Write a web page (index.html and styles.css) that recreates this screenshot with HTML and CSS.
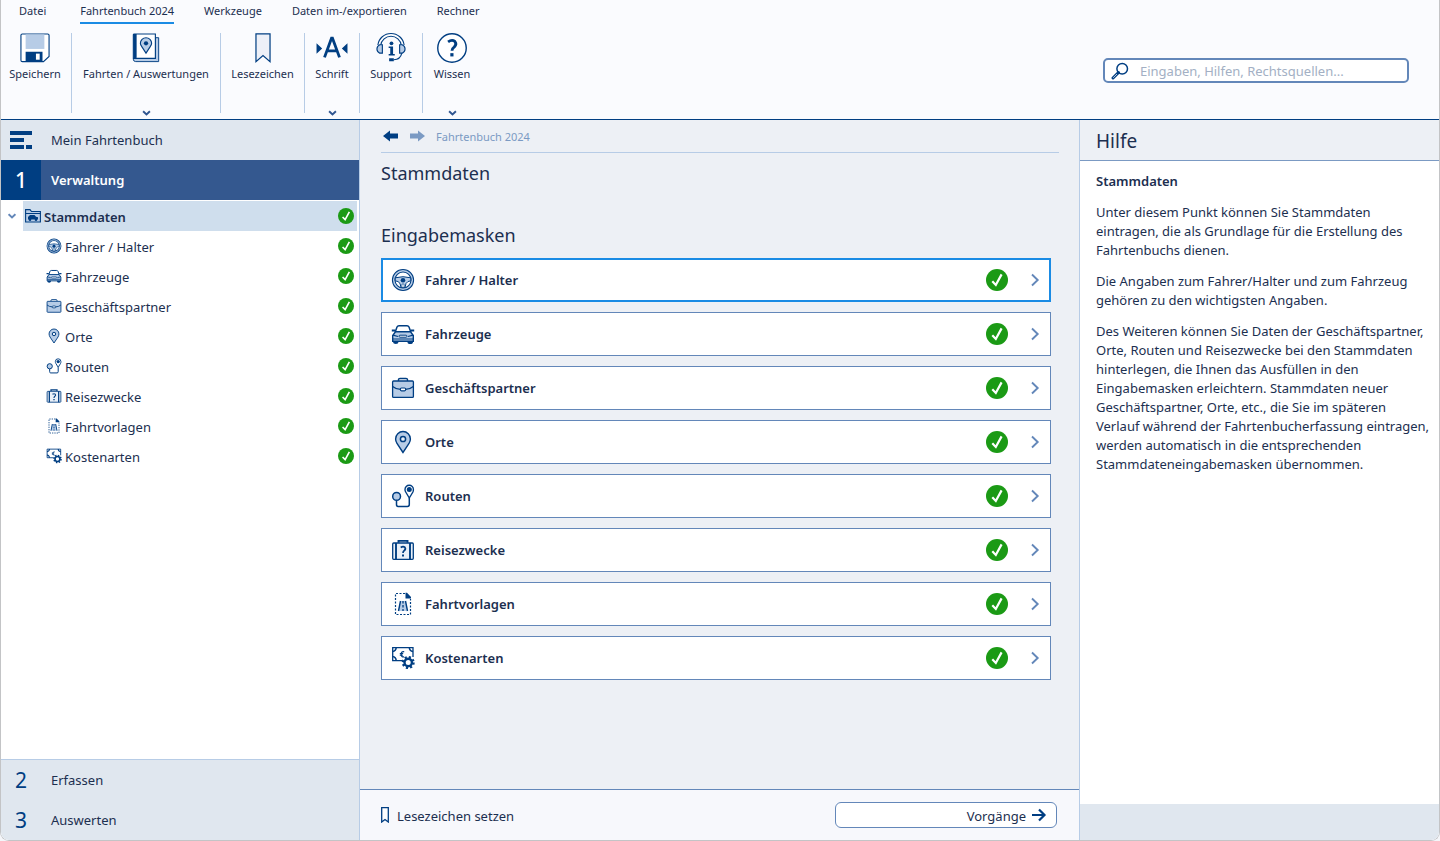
FILE: index.html
```html
<!DOCTYPE html>
<html lang="de">
<head>
<meta charset="utf-8">
<meta name="viewport" content="width=device-width, initial-scale=1">
<title>Fahrtenbuch 2024</title>
<link rel="stylesheet" href="styles.css">
</head>
<body>
<svg class="sprite" aria-hidden="true">
  <symbol id="i-wheel" viewBox="0 0 24 24">
    <circle cx="12" cy="12" r="9.300" fill="#fff" stroke="#003e82" stroke-width="3.600"/>
    <circle cx="12" cy="12" r="9.300" fill="none" stroke="#b7cce6" stroke-width="1.500"/>
    <path d="M4.200 9.800Q12 7.600 19.800 9.800V12.800Q16.500 13 15 15.500L14 19.500H10L9 15.500Q7.500 13 4.200 12.800Z" fill="#b7cce6" stroke="#003e82" stroke-width="1"/>
    <path d="M11 16H13L13.300 19.300H10.700Z" fill="#fff" stroke="#003e82" stroke-width=".6"/>
    <circle cx="12" cy="12.200" r="2.300" fill="#003e82"/>
  </symbol>
  <symbol id="i-car" viewBox="0 0 24 24">
    <path d="M4.200 10L6 5Q6.600 3.700 8 3.700H16Q17.400 3.700 18 5L19.800 10" fill="#fff" stroke="#003e82" stroke-width="1.500"/>
    <path d="M.8 8.500H4.200M19.800 8.500H23.200" stroke="#003e82" stroke-width="1.800"/>
    <path d="M1.700 19.300V13.500L4.500 9.800H19.500L22.300 13.500V19.300Z" fill="#b7cce6" stroke="#003e82" stroke-width="1.400"/>
    <path d="M2 13.200L7 14.500M22 13.200L17 14.500M2 17H22" stroke="#003e82" stroke-width="1.200"/>
    <rect x="8" y="13.200" width="8" height="2" rx="1" fill="#fff" stroke="#003e82"/>
    <path d="M2 19.300H7.500V20Q7.500 22 4.800 22T2 20ZM16.500 19.300H22V20Q22 22 19.200 22T16.500 20Z" fill="#003e82"/>
  </symbol>
  <symbol id="i-case" viewBox="0 0 24 24">
    <path d="M7.500 5V3.500Q7.500 2.500 9 2.500H15Q16.500 2.500 16.500 3.500V5" fill="none" stroke="#003e82" stroke-width="1.400"/>
    <rect x="1.600" y="5" width="20.800" height="16.400" rx="1" fill="#b7cce6" stroke="#003e82" stroke-width="1.300"/>
    <path d="M1.600 10.500Q5 13.300 9.500 13.300H14.500Q19 13.300 22.400 10.500" fill="none" stroke="#003e82" stroke-width="1.300"/>
    <rect x="9.300" y="12" width="5.400" height="2.800" rx="1.200" fill="#fff" stroke="#003e82" stroke-width="1.200"/>
  </symbol>
  <symbol id="i-pin" viewBox="0 0 24 24">
    <path d="M12 22.500L6 13.500Q4.600 11 4.600 8.900A7.400 7.400 0 0 1 19.400 8.900Q19.400 11 18 13.500Z" fill="#b7cce6" stroke="#003e82" stroke-width="1.400"/>
    <circle cx="12" cy="9" r="2.600" fill="#e9f0f8" stroke="#003e82" stroke-width="1.500"/>
  </symbol>
  <symbol id="i-route" viewBox="0 0 24 24">
    <path d="M5.500 16.500V20.500Q5.500 22.400 7 22.400H16.500Q18.300 22.400 18.300 20.500V14" fill="none" stroke="#003e82" stroke-width="1.500"/>
    <circle cx="5.600" cy="12.400" r="3.900" fill="#b7cce6" stroke="#003e82" stroke-width="1.500"/>
    <path d="M18.300 14L14.700 8Q14 6.800 14 5.400A4.200 4.200 0 0 1 22.400 5.400Q22.400 6.800 21.900 8Z" fill="#fff" stroke="#003e82" stroke-width="1.400"/>
    <circle cx="18.300" cy="5.400" r="2.500" fill="#003e82"/>
  </symbol>
  <symbol id="i-luggage" viewBox="0 0 24 24">
    <path d="M7.500 4.800V2.900H16.500V4.800" fill="none" stroke="#003e82" stroke-width="1.900"/>
    <rect x="1.700" y="5" width="20.600" height="16.300" rx="1" fill="#e9f0f8" stroke="#003e82" stroke-width="1.300"/>
    <path d="M5 5V21.500M19 5V21.500" stroke="#003e82" stroke-width="1.900"/>
    <path d="M9.700 9.500Q12 8 13.800 9.200Q15.200 10.900 13.300 12.500Q12 13.400 12 15" fill="none" stroke="#003e82" stroke-width="1.700"/>
    <path d="M11 16.500H13V18.500H11Z" fill="#003e82"/>
  </symbol>
  <symbol id="i-template" viewBox="0 0 24 24">
    <path d="M14 1.500H4.500V22.500H19.500V7" fill="none" stroke="#003e82" stroke-width="1.200" stroke-dasharray="2 1.500"/>
    <path d="M14.500 .8H16L20 5V6.500H14.500Z" fill="#003e82"/>
    <path d="M9.500 9H14.500L17 19H7Z" fill="#b7cce6"/>
    <path d="M9.500 9L7.500 19M14.500 9L16.500 19" stroke="#003e82" stroke-width="1.400"/>
    <path d="M12 9V19" stroke="#003e82" stroke-width="1.300" stroke-dasharray="2.500 1.500"/>
  </symbol>
  <symbol id="i-cost" viewBox="0 0 24 24">
    <path d="M11 14.600H1.700V1.700H22V11" fill="#fff" stroke="#003e82" stroke-width="1.300"/>
    <path d="M1.500 5.500Q5 5 5.200 1.500M22 5.500Q18.500 5 18.300 1.500M1.500 10.500Q5 11 5.200 14.500" fill="none" stroke="#003e82" stroke-width="1.600"/>
    <path d="M13.200 5.800Q10.300 5 10.200 8.200T13.200 10.800M8.800 7.500H12.200M8.800 9.200H11.800" fill="none" stroke="#003e82" stroke-width="1.200"/>
    <circle cx="17.200" cy="16.500" r="5.300" fill="none" stroke="#003e82" stroke-width="2.400" stroke-dasharray="2.080 2.080"/>
    <circle cx="17.200" cy="16.500" r="3.700" fill="#fff" stroke="#003e82" stroke-width="2.400"/>
  </symbol>
  <symbol id="i-check" viewBox="0 0 22 22">
    <circle cx="11" cy="11" r="11" fill="#1b9a15"/>
    <path d="M6.300 12.300L9.800 16L15.600 5.400" fill="none" stroke="#fff" stroke-width="2.200"/>
  </symbol>
  <symbol id="i-right" viewBox="0 0 10 14"><path d="M2 1.500L7.700 7L2 12.500" fill="none" stroke="#6387b9" stroke-width="1.900"/></symbol>
  <symbol id="i-down" viewBox="0 0 8 6"><path d="M.6 1.200L4 4.400L7.400 1.200" fill="none" stroke="currentColor" stroke-width="1.900"/></symbol>
  <symbol id="i-arrow" viewBox="0 0 16 12"><path d="M0 6L7 .5V3.500H15V8.500H7V11.500Z" fill="currentColor"/></symbol>
</svg>

<div class="window">
  <header class="top">
    <nav class="tabs" aria-label="Menü">
      <button class="tab">Datei</button>
      <button class="tab tab-active">Fahrtenbuch 2024</button>
      <button class="tab">Werkzeuge</button>
      <button class="tab">Daten im-/exportieren</button>
      <button class="tab">Rechner</button>
    </nav>
    <div class="ribbon">
      <button class="tool tool-save">
        <svg class="tool-icon" viewBox="0 0 32 32"><path d="M2.500 1H29.500Q31 1 31 2.500V25L25 30.500H2.500Q1 30.500 1 29V2.500Q1 1 2.500 1Z" fill="#fff" stroke="#003e82" stroke-width="1.200"/><path d="M6 1.500H26V17H6Z" fill="#b7cce6"/><path d="M6 20H24V30.500H6Z" fill="#003e82"/><path d="M17 22H21V28.500H17Z" fill="#fff"/></svg>
        <span>Speichern</span>
      </button>
      <button class="tool tool-trips">
        <svg class="tool-icon" viewBox="0 0 32 32"><path d="M3 27H26V5H29.500V30.500H5Q2.500 30.500 2.500 28Z" fill="#b7cce6" stroke="#003e82"/><path d="M3.500 1H26V27H2.500V2Q2.500 1 3.500 1Z" fill="#fff" stroke="#003e82" stroke-width="1.200"/><path d="M2.500 1H6V26.500L3 28Z" fill="#003e82"/><path d="M16 21.500L11.500 14.500Q10 12.500 10 11A6 6 0 0 1 22 11Q22 12.500 20.500 14.500Z" fill="#b7cce6" stroke="#003e82" stroke-width="1.200"/><circle cx="16" cy="11" r="2.300" fill="#003e82"/></svg>
        <span>Fahrten / Auswertungen</span>
        <svg class="tool-more"><use href="#i-down"/></svg>
      </button>
      <button class="tool tool-mark">
        <svg class="tool-icon" viewBox="0 0 32 32"><path d="M8.500 1H23.500V30.500L16 24L8.500 30.500Z" fill="#edf0f8" stroke="#003e82" stroke-width="1.300"/></svg>
        <span>Lesezeichen</span>
      </button>
      <button class="tool tool-font">
        <svg class="tool-icon" viewBox="0 0 32 32"><path d="M-.5 11L5.500 16.500L-.5 22ZM32.500 11L26.500 16.500L32.500 22Z" fill="#003e82"/><path d="M8 26L15.500 5.500H16.500L24 26M11 19H21" fill="none" stroke="#003e82" stroke-width="3"/></svg>
        <span>Schrift</span>
        <svg class="tool-more"><use href="#i-down"/></svg>
      </button>
      <button class="tool tool-help">
        <svg class="tool-icon" viewBox="0 0 32 32"><path d="M3.500 13A12.600 12.600 0 0 1 28.500 13" fill="none" stroke="#003e82" stroke-width="4.200"/><path d="M3.500 13A12.600 12.600 0 0 1 28.500 13" fill="none" stroke="#fff" stroke-width="1.800"/><path d="M6.800 12.500V21.500H4Q1 20 1 17T4 12.500ZM25.200 12.500V21.500H28Q31 20 31 17T28 12.500Z" fill="#b7cce6" stroke="#003e82" stroke-width="1.200"/><circle cx="16.500" cy="11" r="2" fill="#003e82"/><path d="M13.500 14.500H18.200V22.500H20V24H13.500V22.500H15.200V16H13.500ZM14 27H19V30H14Z" fill="#003e82"/><path d="M27.500 21.500Q26 28.500 19 28.500" fill="none" stroke="#003e82" stroke-width="1.200"/></svg>
        <span>Support</span>
      </button>
      <button class="tool tool-know">
        <svg class="tool-icon" viewBox="0 0 32 32"><circle cx="16" cy="16" r="15.200" fill="#fff" stroke="#003e82" stroke-width="1.500"/><path d="M11.800 9.500Q16 6.500 19 9Q21.500 12 18.500 14.800Q16 16.500 16 19" fill="none" stroke="#003e82" stroke-width="3"/><path d="M14.200 21.500H17.600V25H14.200Z" fill="#003e82"/></svg>
        <span>Wissen</span>
        <svg class="tool-more"><use href="#i-down"/></svg>
      </button>
      <label class="search">
        <svg class="search-icon" viewBox="0 0 18 18"><circle cx="11.200" cy="6.800" r="5.300" fill="#fff" stroke="#003e82" stroke-width="1.500"/><path d="M7.500 10.500L2 16" stroke="#003e82" stroke-width="3" stroke-linecap="round"/><path d="M6 12L2.200 15.800" stroke="#fff" stroke-width=".7"/></svg>
        <input type="search" aria-label="Suche" placeholder="Eingaben, Hilfen, Rechtsquellen...">
      </label>
    </div>
  </header>

  <div class="body">
    <aside class="sidebar">
      <button class="section">
        <span class="section-num"><svg class="menu-icon" viewBox="0 0 22 18"><path d="M0 0H22V4H0ZM0 7H14V11H0ZM0 14H14V18H0ZM16 14H22V18H16Z" fill="#003e82"/></svg></span>
        <span>Mein Fahrtenbuch</span>
      </button>
      <button class="section section-active"><span class="section-num">1</span><span>Verwaltung</span></button>
      <div class="tree">
        <div class="tree-root">
          <button class="tree-toggle" aria-label="Stammdaten zuklappen"><svg><use href="#i-down"/></svg></button>
          <a class="tree-row tree-selected" href="#"><svg class="tree-icon" viewBox="0 0 16 16"><path d="M.6 14V1.600H5L6.500 3.500H15.400V14Z" fill="#b7cce6" stroke="#003e82" stroke-width="1.100"/><path d="M.6 5.500H15.400" stroke="#003e82"/><path d="M3 11.500V9L5 7H9.500L11 8.800L13 9.300V11.500Z" fill="#003e82"/><circle cx="5" cy="11.700" r="1.300" fill="#003e82"/><circle cx="11" cy="11.700" r="1.300" fill="#003e82"/></svg><span class="tree-label">Stammdaten</span><svg class="tree-check"><use href="#i-check"/></svg></a>
        </div>
        <a class="tree-row tree-child" href="#"><svg class="tree-icon"><use href="#i-wheel"/></svg><span class="tree-label">Fahrer / Halter</span><svg class="tree-check"><use href="#i-check"/></svg></a>
        <a class="tree-row tree-child" href="#"><svg class="tree-icon"><use href="#i-car"/></svg><span class="tree-label">Fahrzeuge</span><svg class="tree-check"><use href="#i-check"/></svg></a>
        <a class="tree-row tree-child" href="#"><svg class="tree-icon"><use href="#i-case"/></svg><span class="tree-label">Geschäftspartner</span><svg class="tree-check"><use href="#i-check"/></svg></a>
        <a class="tree-row tree-child" href="#"><svg class="tree-icon"><use href="#i-pin"/></svg><span class="tree-label">Orte</span><svg class="tree-check"><use href="#i-check"/></svg></a>
        <a class="tree-row tree-child" href="#"><svg class="tree-icon"><use href="#i-route"/></svg><span class="tree-label">Routen</span><svg class="tree-check"><use href="#i-check"/></svg></a>
        <a class="tree-row tree-child" href="#"><svg class="tree-icon"><use href="#i-luggage"/></svg><span class="tree-label">Reisezwecke</span><svg class="tree-check"><use href="#i-check"/></svg></a>
        <a class="tree-row tree-child" href="#"><svg class="tree-icon"><use href="#i-template"/></svg><span class="tree-label">Fahrtvorlagen</span><svg class="tree-check"><use href="#i-check"/></svg></a>
        <a class="tree-row tree-child" href="#"><svg class="tree-icon"><use href="#i-cost"/></svg><span class="tree-label">Kostenarten</span><svg class="tree-check"><use href="#i-check"/></svg></a>
      </div>
      <div class="sections-end">
        <button class="section"><span class="section-num">2</span><span>Erfassen</span></button>
        <button class="section"><span class="section-num">3</span><span>Auswerten</span></button>
      </div>
    </aside>

    <main class="main">
      <div class="content">
        <nav class="crumbs" aria-label="Pfad">
          <button class="crumb-nav" aria-label="Zurück"><svg><use href="#i-arrow"/></svg></button>
          <button class="crumb-nav crumb-next" aria-label="Vor"><svg><use href="#i-arrow"/></svg></button>
          <a href="#">Fahrtenbuch 2024</a>
        </nav>
        <h1 class="title">Stammdaten</h1>
        <h2 class="title title-sub">Eingabemasken</h2>
        <div class="cards">
          <a class="card card-focus" href="#"><svg class="card-icon"><use href="#i-wheel"/></svg><span class="card-label">Fahrer / Halter</span><svg class="card-check"><use href="#i-check"/></svg><svg class="card-go"><use href="#i-right"/></svg></a>
          <a class="card" href="#"><svg class="card-icon"><use href="#i-car"/></svg><span class="card-label">Fahrzeuge</span><svg class="card-check"><use href="#i-check"/></svg><svg class="card-go"><use href="#i-right"/></svg></a>
          <a class="card" href="#"><svg class="card-icon"><use href="#i-case"/></svg><span class="card-label">Geschäftspartner</span><svg class="card-check"><use href="#i-check"/></svg><svg class="card-go"><use href="#i-right"/></svg></a>
          <a class="card" href="#"><svg class="card-icon"><use href="#i-pin"/></svg><span class="card-label">Orte</span><svg class="card-check"><use href="#i-check"/></svg><svg class="card-go"><use href="#i-right"/></svg></a>
          <a class="card" href="#"><svg class="card-icon"><use href="#i-route"/></svg><span class="card-label">Routen</span><svg class="card-check"><use href="#i-check"/></svg><svg class="card-go"><use href="#i-right"/></svg></a>
          <a class="card" href="#"><svg class="card-icon"><use href="#i-luggage"/></svg><span class="card-label">Reisezwecke</span><svg class="card-check"><use href="#i-check"/></svg><svg class="card-go"><use href="#i-right"/></svg></a>
          <a class="card" href="#"><svg class="card-icon"><use href="#i-template"/></svg><span class="card-label">Fahrtvorlagen</span><svg class="card-check"><use href="#i-check"/></svg><svg class="card-go"><use href="#i-right"/></svg></a>
          <a class="card" href="#"><svg class="card-icon"><use href="#i-cost"/></svg><span class="card-label">Kostenarten</span><svg class="card-check"><use href="#i-check"/></svg><svg class="card-go"><use href="#i-right"/></svg></a>
        </div>
      </div>
      <footer class="actions">
        <button class="mark"><svg viewBox="0 0 8 16"><path d="M.7 .7H7.300V15L4 12.500L.7 15Z" fill="#fff" stroke="#003e82" stroke-width="1.300"/></svg><span>Lesezeichen setzen</span></button>
        <button class="next"><span>Vorgänge</span><svg viewBox="0 0 16 14"><path d="M1 7H13.500M8 1.500L13.500 7L8 12.500" fill="none" stroke="#003e82" stroke-width="2.200"/></svg></button>
      </footer>
    </main>

    <aside class="help">
      <h2 class="help-head">Hilfe</h2>
      <div class="help-text">
        <h3>Stammdaten</h3>
        <p>Unter diesem Punkt können Sie Stammdaten eintragen, die als Grundlage für die Erstellung des Fahrtenbuchs dienen.</p>
        <p>Die Angaben zum Fahrer/Halter und zum Fahrzeug gehören zu den wichtigsten Angaben.</p>
        <p>Des Weiteren können Sie Daten der Geschäftspartner, Orte, Routen und Reisezwecke bei den Stammdaten hinterlegen, die Ihnen das Ausfüllen in den Eingabemasken erleichtern. Stammdaten neuer Geschäftspartner, Orte, etc., die Sie im späteren Verlauf während der Fahrtenbucherfassung eintragen, werden automatisch in die entsprechenden Stammdateneingabemasken übernommen.</p>
      </div>
      <div class="help-foot"></div>
    </aside>
  </div>
</div>
</body>
</html>
```
FILE: styles.css
```css
* { box-sizing: border-box; }

body {
  margin: 0;
  background: #f4f6fa;
  color: #1c2f50;
  font: 13px/19px "Noto Sans", "Open Sans", sans-serif;
}

button {
  margin: 0;
  padding: 0;
  border: 0;
  background: none;
  color: inherit;
  font: inherit;
}

a { color: inherit; text-decoration: none; }
h1, h2, h3, p { margin: 0; }
svg { display: block; flex: none; }
.sprite { position: absolute; width: 0; height: 0; }

.window {
  display: flex;
  flex-direction: column;
  min-height: 100vh;
  border: 1px solid #c3c4c6;
  border-top: 0;
  border-radius: 0 0 9px 9px;
  overflow: hidden;
}

/* Menu and ribbon */
.top {
  background: #fafbfe;
  border-bottom: 1px solid #003e82;
  font-size: 11px;
}

.tabs { display: flex; gap: 30px; padding-left: 18px; height: 24px; }
.tab { padding-bottom: 2px; line-height: 22px; white-space: nowrap; }
.tab:first-child { margin-right: 4px; }
.tab-active { padding-bottom: 0; border-bottom: 2px solid #1a8be4; }

.ribbon { display: flex; padding: 9px 0 6px; }
.tool {
  display: flex;
  flex-direction: column;
  align-items: center;
  height: 80px;
  border-right: 1px solid #b7cce6;
  line-height: 18px;
  white-space: nowrap;
  color: #1c2f50;
}
.tool-icon { width: 30px; height: 30px; margin-bottom: 2px; overflow: visible; }
.tool-more { width: 9px; height: 6px; margin-top: 27px; color: #2f5590; }
.tool-save { width: 71px; padding-right: 2px; }
.tool-trips { width: 149px; }
.tool-mark { width: 84px; }
.tool-font { width: 55px; }
.tool-help { width: 63px; }
.tool-know { width: 58px; border-right: 0; }

.search {
  display: flex;
  align-items: center;
  gap: 11px;
  width: 306px;
  height: 25px;
  margin: 25px 30px 0 auto;
  padding-left: 6px;
  border: 2px solid #6387b9;
  border-radius: 5px;
  background: #fff;
}
.search-icon { width: 18px; height: 18px; }
.search input {
  flex: 1;
  min-width: 0;
  padding: 2px 0 0;
  border: 0;
  outline: 0;
  background: none;
  font: inherit;
  font-size: 13px;
}
.search input::placeholder { color: #a3b0c4; }

/* Three columns */
.body { display: grid; grid-template-columns: 359px 1fr 360px; flex: 1; }

.sidebar {
  display: flex;
  flex-direction: column;
  background: #fff;
  border-right: 1px solid #b7cce6;
}
.section {
  display: flex;
  align-items: center;
  gap: 10px;
  width: 100%;
  height: 40px;
  background: #e0e7ef;
  text-align: left;
}
.section-num {
  display: flex;
  align-items: center;
  justify-content: center;
  width: 40px;
  height: 40px;
  color: #003e82;
  font-size: 21px;
}
.menu-icon { width: 22px; height: 18px; }
.section-active { background: #34588f; color: #fff; font-weight: 600; }
.section-active .section-num { background: #003e82; color: #fff; font-weight: 500; }

.tree { flex: 1; padding: 1px 2px 0 0; }
.tree-root { display: flex; }
.tree-toggle { display: flex; align-items: center; justify-content: center; width: 22px; color: #6387b9; }
.tree-toggle svg { width: 8px; height: 6px; }
.tree-row {
  display: flex;
  flex: 1;
  align-items: center;
  gap: 3px;
  height: 30px;
  padding: 0 3px 0 2px;
}
.tree-selected { background: #cfdeed; font-weight: 600; }
.tree-child { padding-left: 45px; }
.tree-icon, .tree-check { width: 16px; height: 16px; }
.tree-label { padding-top: 2px; }
.tree-check { margin-left: auto; }
.sections-end { border-top: 1px solid #b7cce6; }

.main { display: flex; flex-direction: column; background: #edf0f5; }
.content { flex: 1; padding: 0 20px 0 21px; }
.crumbs {
  display: flex;
  align-items: center;
  gap: 10px;
  height: 33px;
  padding-left: 2px;
  border-bottom: 1px solid #b7cce6;
  color: #7b9ac3;
  font-size: 11px;
}
.crumb-nav { color: #003e82; }
.crumb-nav svg { width: 16px; height: 12px; }
.crumb-next { color: #7b9ac3; transform: scaleX(-1); }
.crumbs a { margin-left: 1px; }

.title {
  padding-top: 7px;
  color: #1c2f50;
  font-size: 18px;
  font-weight: 400;
  line-height: 26px;
}
.title-sub { padding-top: 36px; }

.cards { display: grid; gap: 10px; padding: 10px 8px 20px 0; }
.card {
  display: flex;
  align-items: center;
  height: 44px;
  padding: 0 10px 0 9px;
  border: 1px solid #6387b9;
  background: #fff;
  font-weight: 600;
}
.card-focus { padding: 0 9px 0 8px; border: 2px solid #1a8be4; }
.card-icon { width: 24px; height: 24px; }
.card-label { flex: 1; margin-left: 10px; }
.card-check { width: 22px; height: 22px; }
.card-go { width: 10px; height: 14px; margin-left: 22px; }

.actions {
  display: flex;
  align-items: center;
  justify-content: space-between;
  height: 51px;
  padding: 0 22px 0 21px;
  border-top: 1px solid #6387b9;
  background: #f7f8fc;
}
.mark { display: flex; align-items: center; gap: 8px; }
.mark span, .next span { padding-top: 2px; }
.mark svg { width: 8px; height: 16px; }
.next {
  display: flex;
  align-items: center;
  justify-content: flex-end;
  gap: 5px;
  width: 222px;
  height: 26px;
  padding-right: 9px;
  border: 1px solid #6387b9;
  border-radius: 6px;
  background: #fff;
}
.next svg { width: 16px; height: 14px; }

.help {
  display: flex;
  flex-direction: column;
  border-left: 1px solid #b7cce6;
  background: #fff;
}
.help-head {
  height: 41px;
  padding: 2px 0 0 16px;
  border-bottom: 1px solid #7b9ac3;
  background: #edf0f5;
  font-size: 19px;
  font-weight: 400;
  line-height: 38px;
}
.help-text {
  display: flex;
  flex: 1;
  flex-direction: column;
  gap: 12px;
  padding: 11px 9px 12px 16px;
}
.help-text h3 { font-size: 13px; font-weight: 600; }
.help-foot { height: 36px; background: #e0e7ef; }
```
